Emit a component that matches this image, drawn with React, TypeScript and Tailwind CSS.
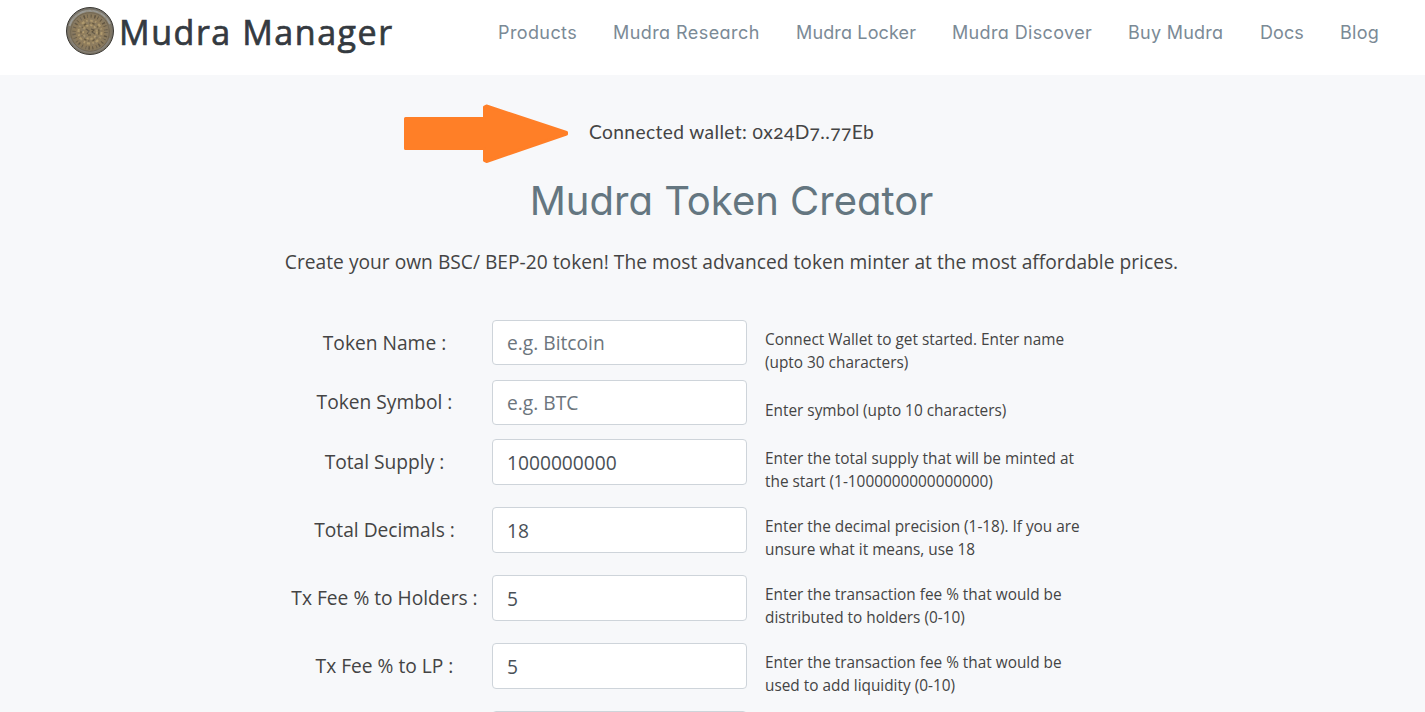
const NAV = [
  { label: "Products", box: "w-[79px] tracking-[0.39px]" },
  { label: "Mudra Research", box: "w-[147px] tracking-[0.43px]" },
  { label: "Mudra Locker", box: "w-[120px] tracking-[0.14px]" },
  { label: "Mudra Discover", box: "w-[140px] tracking-[0.36px]" },
  { label: "Buy Mudra", box: "w-[96px] tracking-[0.26px]" },
  { label: "Docs", box: "w-[44px] tracking-[0.1px]" },
  { label: "Blog", box: "w-[39px] tracking-[0.25px]" },
];

const ROWS = [
  { label: "Token Name :", placeholder: "e.g. Bitcoin", value: "", hint: "Connect Wallet to get started. Enter name (upto 30 characters)", row: "h-[60px]", input: "h-[45px]", labelPad: "pt-[9px]", hintPad: "pt-[8px]" },
  { label: "Token Symbol :", placeholder: "e.g. BTC", value: "", hint: "Enter symbol (upto 10 characters)", row: "h-[59px]", input: "h-[45px]", labelPad: "pt-[8px]", hintPad: "pt-[19px]" },
  { label: "Total Supply :", placeholder: "", value: "1000000000", hint: "Enter the total supply that will be minted at the start (1-1000000000000000)", row: "h-[68px]", input: "h-[46px]", labelPad: "pt-[9px]", hintPad: "pt-[8px]" },
  { label: "Total Decimals :", placeholder: "", value: "18", hint: "Enter the decimal precision (1-18). If you are unsure what it means, use 18", row: "h-[68px]", input: "h-[46px]", labelPad: "pt-[9px]", hintPad: "pt-[8px]" },
  { label: "Tx Fee % to Holders :", placeholder: "", value: "5", hint: "Enter the transaction fee % that would be distributed to holders (0-10)", row: "h-[68px]", input: "h-[46px]", labelPad: "pt-[9px]", hintPad: "pt-[8px]" },
  { label: "Tx Fee % to LP :", placeholder: "", value: "5", hint: "Enter the transaction fee % that would be used to add liquidity (0-10)", row: "h-[68px]", input: "h-[46px]", labelPad: "pt-[9px]", hintPad: "pt-[8px]" },
  { label: "", placeholder: "", value: "", hint: "", row: "h-[68px]", input: "h-[46px]", labelPad: "", hintPad: "" },
];

function Coin() {
  return (
    <svg className="h-12 w-12 shrink-0" viewBox="0 0 48 48" fill="none">
      <defs>
        <radialGradient id="coin" cx="0.5" cy="0.52" r="0.5">
          <stop offset="0" stopColor="#92805f" />
          <stop offset="0.65" stopColor="#8f7c5b" />
          <stop offset="0.83" stopColor="#857860" />
          <stop offset="1" stopColor="#74716a" />
        </radialGradient>
        <filter id="worn" x="0" y="0" width="1" height="1">
          <feTurbulence type="fractalNoise" baseFrequency="0.28" numOctaves="2" seed="4" />
          <feColorMatrix values="0 0 0 0 .24  0 0 0 0 .2  0 0 0 0 .14  3 0 0 0 -1.35" />
          <feComposite in2="SourceGraphic" operator="in" />
        </filter>
      </defs>
      <circle cx="24" cy="24" r="23.500" fill="url(#coin)" stroke="#3b3934" strokeWidth="1" />
      <path d="M3.500 19A21.500 21.500 0 0 1 44 17" stroke="#9a9a95" strokeWidth="2" />
      <path d="M4 31a21.300 21.300 0 0 0 40 0" stroke="#85817a" strokeWidth="1.600" />
      <circle cx="24" cy="25" r="19.300" stroke="#6b604c" strokeWidth=".8" />
      <circle cx="24" cy="25" r="16" stroke="#5f5442" strokeWidth="3.400" strokeDasharray="1 2.600 1.500 2 .8 2.900" />
      <circle cx="24" cy="25" r="11.500" stroke="#b09a6e" strokeWidth="2.200" strokeDasharray="3 2 1.500 2.500" />
      <circle cx="24" cy="25" r="9" stroke="#65583f" strokeWidth="1.200" strokeDasharray="2.600 3.100 1.200 2" />
      <circle cx="24" cy="25" r="6.800" stroke="#b59e70" strokeWidth="1.800" strokeDasharray="2.200 1.800" />
      <path d="m20 22 3 2-2 3m4-5 3 1-2 2 3 2m-7 1h3" stroke="#5d523f" strokeWidth="1.100" />
      <circle cx="24" cy="24" r="22.500" fill="#000" opacity=".5" filter="url(#worn)" />
    </svg>
  );
}

export default function App() {
  return (
    <div className="h-[712px] overflow-hidden bg-[#f7f8fa] font-['Open_Sans',sans-serif] text-[#444444]">
      <header className="flex h-[75px] bg-white pl-[66px] pt-[7px]">
        <div className="flex h-12 w-[432px] shrink-0 items-center gap-[5px] whitespace-nowrap text-[#343a40]">
          <Coin />
          <span className="pt-px text-[34px] leading-[50px] tracking-[1.55px] [-webkit-text-stroke:0.7px_#343a40]">
            Mudra Manager
          </span>
        </div>
        <nav className="flex h-[50px] items-center gap-[36px] whitespace-nowrap font-[Inter,sans-serif] text-[18px] text-[#7b8a96] [font-feature-settings:'cv11']">
          {NAV.map((n) => (
            <a key={n.label} className={n.box}>{n.label}</a>
          ))}
        </nav>
      </header>

      <main className="w-[1125px] pl-[276px]">
        <div className="flex h-[90px] items-center pl-[128px] pt-[27px]">
          <svg className="h-[60px] w-[165px] shrink-0" viewBox="0 0 165 60">
            <path
              d="M1.500 14.500H80.500V3L82.500 2L162.500 28.500V30L82.500 57.500L80.500 56.500V44.500H1.500Z"
              fill="#ff7f27"
              stroke="#ff7f27"
              strokeWidth="3"
              strokeLinejoin="round"
            />
          </svg>
          <span className="whitespace-nowrap pb-[3px] pl-[20px] font-[Lato,sans-serif] text-[19.2px] leading-6 tracking-[0.38px] [font-feature-settings:'onum']">
            Connected wallet: 0x24D7..77Eb
          </span>
        </div>
        <h1 className="w-[911px] pt-[12px] text-center font-[Inter,sans-serif] text-[40px] font-normal leading-[48px] text-[#647680] [font-feature-settings:'cv11']">
          Mudra Token Creator
        </h1>
        <p className="w-[911px] whitespace-nowrap pt-[23px] text-center text-[19.2px] leading-[28px] tracking-[0.01px]">
          Create your own BSC/ BEP-20 token! The most advanced token minter at the most affordable prices.
        </p>
        <form className="pt-[44px]">
          {ROWS.map((r, i) => (
            <div key={i} className={`flex items-start ${r.row}`}>
              <label className={`w-[216px] shrink-0 whitespace-nowrap pl-px text-center text-[19.2px] leading-[28px] ${r.labelPad}`}>
                {r.label}
              </label>
              <input
                className={`w-[255px] shrink-0 rounded border border-[#ced4da] bg-white px-[14px] text-[19.2px] text-[#495057] placeholder:text-[#6c757d] ${r.input}`}
                placeholder={r.placeholder}
                defaultValue={r.value}
              />
              <p className={`w-[340px] pl-[18px] text-[15.36px] leading-[23px] ${r.hintPad}`}>{r.hint}</p>
            </div>
          ))}
        </form>
      </main>
    </div>
  );
}
